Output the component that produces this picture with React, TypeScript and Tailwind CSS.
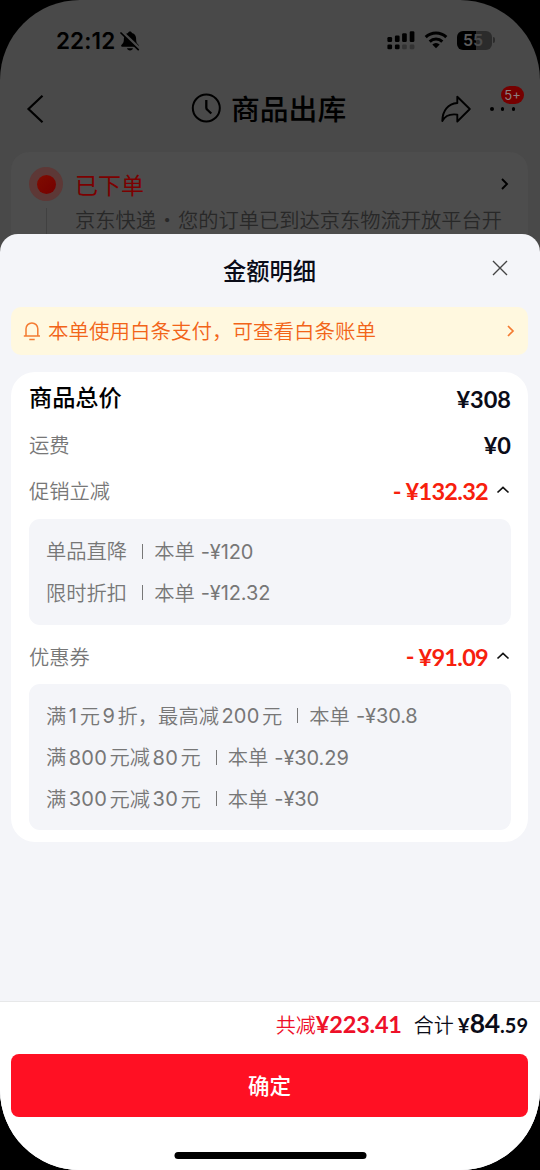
import React from "react";

const cjk = "font-['Noto_Sans_CJK_SC',sans-serif]";
const num = "font-['Lato','Noto_Sans_CJK_SC',sans-serif] font-bold";

function StatusBar() {
  return (
    <div className="flex h-[80px] items-center justify-between pl-14 pr-[45px] text-black">
      <div className="flex items-center gap-[5px] pt-px">
        <span className="font-['Inter',sans-serif] text-[22.500px] leading-7 font-semibold tracking-[0.100px]">22:12</span>
        <svg className="h-[20px] w-[20px]" viewBox="0 0 20 20">
          <path d="M10 .5c1 0 1.800.6 2 1.500 2.700.8 4.100 3 4.100 5.500 0 4 1 5 2.300 6.300.9.900.5 2-.6 2H2.200c-1.100 0-1.500-1.100-.6-2C2.900 12.500 3.900 11.500 3.900 7.500c0-2.500 1.400-4.700 4.100-5.500C8.200 1.100 9 .5 10 .5zM7 17.200h6c-.4 1.400-1.400 2.200-3 2.200s-2.600-.8-3-2.200z" fill="#000" />
          <path d="M2 1.200 19.500 18" stroke="#494949" strokeWidth="3.400" />
          <path d="M1 2 18.200 18.700" stroke="#000" strokeWidth="1.700" strokeLinecap="round" />
        </svg>
      </div>
      <div className="flex items-center">
        <svg className="h-[20px] w-[28px]" viewBox="0 0 28 20">
          <g fill="#000">
            <rect x=".4" y="7" width="4.700" height="5" rx="1.300" />
            <rect x="7.900" y="5.500" width="4.700" height="6.500" rx="1.300" />
            <rect x="15.100" y="3.200" width="4.700" height="8.800" rx="1.300" />
            <rect x="22.700" y="1.200" width="4.700" height="10.800" rx="1.300" />
            <rect x=".4" y="14.500" width="4.700" height="4.700" rx="1.300" />
            <rect x="7.900" y="14.500" width="4.700" height="4.700" rx="1.300" />
          </g>
          <g fill="#333">
            <rect x="15.100" y="14.500" width="4.700" height="4.700" rx="1.300" />
            <rect x="22.700" y="14.500" width="4.700" height="4.700" rx="1.300" />
          </g>
        </svg>
        <svg className="ml-[9px] h-[18px] w-[24px]" viewBox="0 0 24 18" fill="none" stroke="#000">
          <path d="M1.700 6.200a14.800 14.800 0 0 1 20.600 0M5.700 10.600a9 9 0 0 1 12.600 0" strokeWidth="3" />
          <path d="M12 17.300 8.300 13.500a5.300 5.300 0 0 1 7.400 0z" fill="#000" stroke="none" />
        </svg>
        <div className="ml-[9px] flex h-[19px] w-[35px] items-center justify-center rounded-[6px] bg-[linear-gradient(90deg,#000_54%,#2b2b2b_54%)] pr-[3px] font-['Inter',sans-serif] text-[16px] leading-[19px] font-semibold">
          <span className="pt-px text-[#5c5c5c]">5</span>
          <span className="pt-px text-[#4b4b4b]">5</span>
        </div>
        <div className="ml-px h-[6px] w-[2px] rounded-r bg-[#2b2b2b]" />
      </div>
    </div>
  );
}

function NavBar() {
  return (
    <div className="flex h-[72px] items-center pr-[24px] pl-[26px]">
      <svg className="mt-[-14px] h-[30px] w-[18px]" viewBox="0 0 18 30" fill="none" stroke="#000" strokeWidth="2.200">
        <path d="M16.500 1.700 2.500 15 16.500 28.300" />
      </svg>
      <div className="mt-[-17px] ml-[147px] flex items-center gap-[10px]">
        <svg className="h-[30px] w-[30px]" viewBox="0 0 30 30" fill="none" stroke="#000" strokeWidth="2">
          <circle cx="15.300" cy="15" r="13.500" />
          <path d="M15.300 7v7.500c0 1 .2 1.500.8 2l4.200 4" strokeWidth="2.300" />
        </svg>
        <h1 className={`${cjk} text-[28.800px] leading-10 font-medium text-black`}>商品出库</h1>
      </div>
      <div className="mt-[-14px] ml-auto flex items-center">
        <svg className="h-[28px] w-[32px]" viewBox="0 0 32 28" fill="none" stroke="#000" strokeWidth="1.900" strokeLinejoin="round">
          <path d="M17.300 1.700 29.800 14 17.300 26.500v-6.900C10 18.600 5 20.700 2.300 26 2.500 15.500 8 8.700 17.300 8z" />
        </svg>
        <div className="relative ml-[17px] flex w-[27px] justify-between px-px">
          <span className="h-[3.500px] w-[3.500px] rounded-full bg-black" />
          <span className="h-[3.500px] w-[3.500px] rounded-full bg-black" />
          <span className="h-[3.500px] w-[3.500px] rounded-full bg-black" />
          <span className="absolute top-[-21px] left-[12px] flex h-[18px] w-[23px] items-center justify-center rounded-full bg-[#750000] font-['Inter',sans-serif] text-[13px] text-[#8c8080]">5+</span>
        </div>
      </div>
    </div>
  );
}

function OrderCard() {
  return (
    <div className="ml-[11px] mr-[12px] flex h-[140px] rounded-[18px] bg-[#4d4d4d] pt-[15px] pl-[18px]">
      <div className="flex w-[34px] flex-col items-center">
        <div className="flex h-[34px] w-[34px] items-center justify-center rounded-full bg-[#5d3836]">
          <div className="h-[19px] w-[19px] rounded-full bg-[linear-gradient(135deg,#800c00,#740000)]" />
        </div>
        <div className="mt-[7px] w-px flex-1 bg-[#414141]" />
      </div>
      <div className="flex-1 pl-[12px]">
        <div className="flex h-[34px] items-center justify-between pr-[19px]">
          <span className={`${cjk} mt-[-1px] text-[23px] leading-8 text-[#7c0000]`}>已下单</span>
          <svg className="h-[14px] w-[9px]" viewBox="0 0 9 14" fill="none" stroke="#000" strokeWidth="1.900"><path d="m2 2 5 5-5 5" /></svg>
        </div>
        <p className={`${cjk} mt-[3px] text-[20.250px] leading-8 font-[350] whitespace-nowrap text-[#282828]`}>京东快递<span className="mx-px inline-block w-[20px] text-center">·</span>您的订单已到达京东物流开放平台开</p>
      </div>
    </div>
  );
}

function Details({ rows }: { rows: { name: string; saved: string }[] }) {
  return (
    <div className="rounded-[11px] bg-[#f4f5f9] px-[17px] pt-[12px] pb-[11px]">
      {rows.map((r) => (
        <div key={r.name} className="flex h-[41.300px] items-center text-[20.300px] font-[350] whitespace-nowrap text-[#777]">
          <span className="flex items-center">
            {r.name.split(/(\d+)/).map((p, i) => (
              <span key={i} className={/^\d/.test(p) ? "px-[2.500px] font-['Inter',sans-serif] text-[20px] font-normal tracking-[0.200px]" : `${cjk} mt-[-2px]`}>{p}</span>
            ))}
          </span>
          <span className="mt-[-1px] mr-[11px] ml-[15px] h-[15px] w-px bg-[#777]" />
          <span className={`${cjk} mt-[-2px]`}>本单</span>
          <span className="ml-[6px] font-['Inter',sans-serif] text-[20px] font-normal tracking-[-0.100px]">{r.saved}</span>
        </div>
      ))}
    </div>
  );
}

function Chevron() {
  return (
    <svg className="mt-[-3px] mr-px ml-[8px] h-[10px] w-[14px]" viewBox="0 0 14 10" fill="none" stroke="#111" strokeWidth="1.700"><path d="m1.500 7.500 5.500-5.200 5.500 5.200" /></svg>
  );
}

function Discount({ label, value }: { label: string; value: string }) {
  return (
    <div className="flex h-[47px] items-center justify-between">
      <span className={`${cjk} mt-[-2px] text-[20.300px] font-[350] text-[#777]`}>{label}</span>
      <span className="flex items-center">
        <span className={`${num} mr-[4px] text-[23.500px] text-[#f7200d]`}>-</span>
        <span className={`${num} pt-px text-[23.500px] tracking-[-0.700px] text-[#f7200d]`}>{value}</span>
        <Chevron />
      </span>
    </div>
  );
}

export default function App() {
  return (
    <div className="h-[1170px] w-[540px] overflow-hidden bg-black">
      <div className="relative h-full overflow-hidden rounded-[80px] bg-[#494949]">
        <StatusBar />
        <NavBar />
        <OrderCard />

        <section className="absolute inset-x-0 top-[234px] bottom-0 flex flex-col rounded-t-[18px] bg-[#f4f5f9]">
          <header className="grid h-[73px] grid-cols-[40px_1fr_40px] items-center">
            <span />
            <h2 className={`${cjk} mt-[-1px] mr-px text-center text-[23.300px] font-medium text-[#0b0c18]`}>金额明细</h2>
            <svg className="mt-[-5px] ml-[-8px] h-[16px] w-[16px]" viewBox="0 0 16 16" fill="none" stroke="#444" strokeWidth="1.400"><path d="m1 1 14 14M15 1 1 15" /></svg>
          </header>

          <div className="mr-[12px] ml-[11px] flex h-[48px] items-center rounded-[10px] bg-[#fff8df] pr-[13px] pl-[12px]">
            <svg className="h-[20px] w-[18px]" viewBox="0 0 18 20" fill="none" stroke="#f47b32" strokeWidth="1.500">
              <path d="M3 15V7.800a5.900 5.900 0 0 1 11.800 0V15M.8 15h16.200M6.300 18.600h5.400" />
            </svg>
            <span className={`${cjk} mt-[-1px] ml-[7px] flex-1 text-[20.500px] font-[350] text-[#f26418]`}>本单使用白条支付，可查看白条账单</span>
            <svg className="h-[14px] w-[9px]" viewBox="0 0 9 14" fill="none" stroke="#f47b32" strokeWidth="1.700"><path d="m2 2 5 5-5 5" /></svg>
          </div>

          <div className="mr-[12px] ml-[11px] mt-[17px] h-[470px] rounded-[24px] bg-white pr-[17px] pl-[18px] pt-[2px]">
            <div className="flex h-[47px] items-center justify-between">
              <span className={`${cjk} mt-[-2px] text-[23.200px] font-medium text-black`}>商品总价</span>
              <span className={`${num} pt-[4px] text-[23.500px] text-[#0b0c18]`}>¥308</span>
            </div>
            <div className="flex h-[47px] items-center justify-between">
              <span className={`${cjk} mt-[-1px] text-[20.300px] font-[350] text-[#777]`}>运费</span>
              <span className={`${num} pt-[2px] text-[23.500px] text-[#0b0c18]`}>¥0</span>
            </div>
            <Discount label="促销立减" value="¥132.32" />
            <div className="mt-[4px]">
              <Details rows={[{ name: "单品直降", saved: "-¥120" }, { name: "限时折扣", saved: "-¥12.32" }]} />
            </div>
            <div className="mt-[9px] mb-[3px]">
              <Discount label="优惠券" value="¥91.09" />
            </div>
            <Details rows={[{ name: "满1元9折，最高减200元", saved: "-¥30.8" }, { name: "满800元减80元", saved: "-¥30.29" }, { name: "满300元减30元", saved: "-¥30" }]} />
          </div>

          <footer className="mt-auto h-[169px] border-t border-[#e7e8e9] bg-white pr-[12px] pl-[11px]">
            <div className="flex h-[52px] items-baseline justify-end pt-[4px] leading-[34px]">
              <span className={`${cjk} text-[20px] font-[350] text-[#ee1029]`}>共减</span>
              <span className={`${num} text-[23.500px] tracking-[-0.200px] text-[#ee1029]`}>¥223.41</span>
              <span className={`${cjk} ml-[12px] text-[20px] font-[350] text-[#0b0c18]`}>合计</span>
              <span className={`${num} ml-[4px] text-[20.500px] text-[#0b0c18]`}>¥</span>
              <span className={`${num} text-[26.500px] tracking-[-0.200px] text-[#0b0c18]`}>84</span>
              <span className={`${num} text-[20px] text-[#0b0c18]`}>.59</span>
            </div>
            <button className={`${cjk} flex h-[63px] w-full items-center justify-center rounded-[8px] bg-[#ff1023] pb-px text-[21.500px] font-medium text-white`}>确定</button>
            <div className="mx-auto mt-[35px] h-[7px] w-[192px] translate-x-[0.500px] rounded-full bg-black" />
          </footer>
        </section>
      </div>
    </div>
  );
}
